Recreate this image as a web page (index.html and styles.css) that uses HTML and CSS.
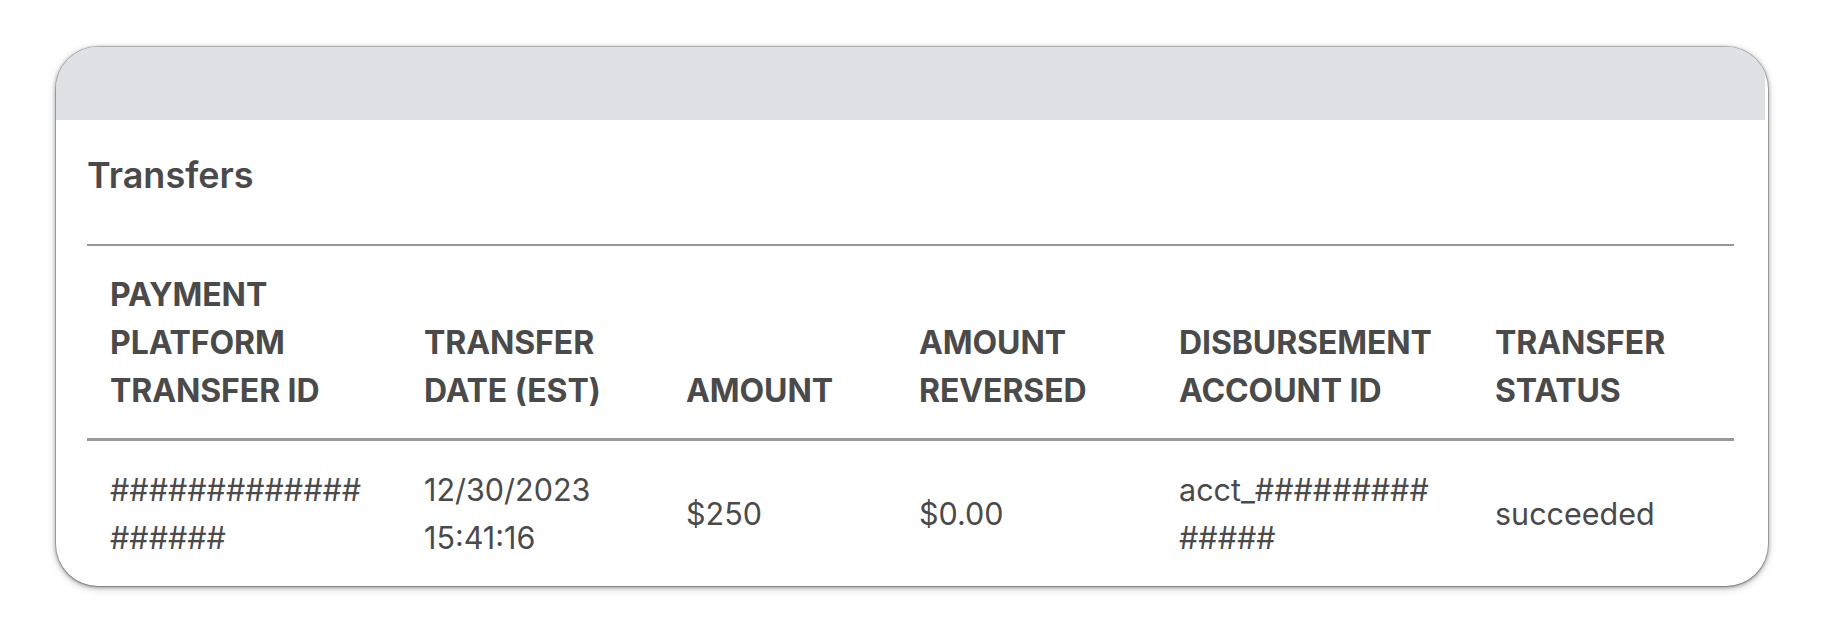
FILE: index.html
```html
<!DOCTYPE html>
<html lang="en">
<head>
<meta charset="utf-8">
<title>Transfers</title>
<link rel="stylesheet" href="styles.css">
</head>
<body>
<div class="card">
  <div class="card-header"></div>
  <div class="card-body">
    <h2 class="title">Transfers</h2>
    <table class="table">
      <thead>
        <tr>
          <th class="c1">PAYMENT<br>PLATFORM<br>TRANSFER ID</th>
          <th class="c2">TRANSFER<br>DATE (EST)</th>
          <th class="c3">AMOUNT</th>
          <th class="c4">AMOUNT<br>REVERSED</th>
          <th class="c5">DISBURSEMENT<br>ACCOUNT ID</th>
          <th class="c6">TRANSFER<br>STATUS</th>
        </tr>
      </thead>
      <tbody>
        <tr>
          <td>#############<br>######</td>
          <td>12/30/2023<br>15:41:16</td>
          <td>$250</td>
          <td>$0.00</td>
          <td>acct_#########<br>#####</td>
          <td>succeeded</td>
        </tr>
      </tbody>
    </table>
  </div>
</div>
</body>
</html>
```
FILE: styles.css
```css
html, body {
  margin: 0;
  background: #ffffff;
}
body {
  padding: 47px 56px 46px;
  font-family: Inter, "Liberation Sans", sans-serif;
  color: #4a4a4a;
}
.card {
  background: #ffffff;
  border-radius: 42px;
  overflow: hidden;
  box-shadow: 0 0 0 1px rgba(0, 0, 0, 0.18), 0 1px 4px rgba(0, 0, 0, 0.45), 0 2px 10px rgba(0, 0, 0, 0.2);
}
.card-header {
  height: 73px;
  background: #dee1e5;
  margin-right: 3px;
}
.card-body {
  padding: 31px 34px 0 31px;
}
.title {
  margin: 0 0 45px 0;
  font-size: 36px;
  line-height: 48px;
  font-weight: 600;
  color: #4a4a4a;
}
.table {
  width: 100%;
  border-collapse: collapse;
  table-layout: fixed;
  border-top: 2px solid #999999;
}
.table th,
.table td {
  box-sizing: border-box;
  text-align: left;
  line-height: 48px;
  padding: 25px 23px 23px;
  color: #4a4a4a;
}
.table th {
  vertical-align: bottom;
  font-size: 32px;
  font-weight: 700;
  letter-spacing: -0.1px;
  border-bottom: 3px solid #999999;
}
.table td {
  vertical-align: middle;
  font-size: 30.5px;
  font-weight: 400;
  padding-bottom: 24px;
}
.c1 { width: 314px; }
.c2 { width: 262px; }
.c3 { width: 233px; }
.c4 { width: 260px; }
.c5 { width: 316px; }
```
